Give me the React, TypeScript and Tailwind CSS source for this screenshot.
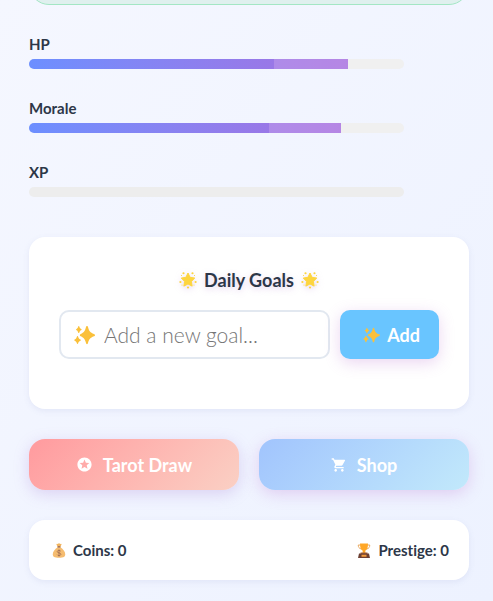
import { useState } from 'react';
import { MdShoppingCart, MdStars } from 'react-icons/md';

interface IconProps {
    className?: string;
}

interface Stat {
    name: string;
    value: number;
}

const stats: Stat[] = [
    { name: 'HP', value: 85 },
    { name: 'Morale', value: 83.3 },
    { name: 'XP', value: 0 },
];

const Sparkles = ({ className }: IconProps) => (
    <svg viewBox="0 0 42 40" className={className} fill="#fac03a" aria-hidden="true">
        <path d="M26 2c1.200 0 1.600.8 2 2.200 2.300 8.500 4.200 11 12 14 1.300.5 2 1 2 2.200s-.7 1.700-2 2.200c-7.800 3-9.700 5.500-12 13.500-.4 1.400-.8 2.300-2 2.300s-1.600-.9-2-2.300c-2.300-8-4.200-10.500-10.500-13.500-1.200-.5-1.800-1-1.800-2.200s.6-1.700 1.800-2.200c6.300-3 8.200-5.500 10.500-14 .4-1.400.8-2.200 2-2.200z" />
        <path d="M9.500 2c.7 0 .9.500 1.100 1.200 1 3.300 1.500 3.700 3.700 4.700.7.300 1.100.6 1.100 1.200s-.4.900-1.100 1.200c-2.200 1-2.700 1.700-3.700 4.600-.2.700-.4 1.200-1.100 1.200s-.9-.5-1.100-1.200c-1-2.900-1.500-3.600-3.400-4.600-.7-.3-1-.6-1-1.200s.3-.9 1-1.200c1.900-1 2.400-1.400 3.400-4.700.2-.7.400-1.200 1.100-1.200z" />
        <path d="M7 22c.8 0 1 .6 1.300 1.400 1 3.300 1.800 4.300 4.400 5.400.7.300 1.100.7 1.100 1.300s-.4 1-1.100 1.300c-2.600 1.100-3.400 2-4.400 5.200-.3.800-.5 1.400-1.300 1.400s-1-.6-1.300-1.400c-1-3.200-1.800-4.100-4.200-5.200-.7-.3-1.100-.7-1.100-1.300s.4-1 1.100-1.300c2.400-1.100 3.200-2.100 4.200-5.400.3-.8.500-1.400 1.300-1.400z" />
    </svg>
);

const GlowingStar = ({ className }: IconProps) => (
    <svg viewBox="0 0 36 36" className={className} fill="#fdd53f" aria-hidden="true">
        <path
            d="M18 4l4.200 8.700 9.300 1.400-6.700 6.700 1.500 9.500-8.300-4.400-8.300 4.400 1.500-9.500-6.700-6.700 9.300-1.400z"
            stroke="#fdd53f"
            strokeWidth="2"
            strokeLinejoin="round"
        />
        <circle cx="9" cy="4.500" r="2.200" />
        <circle cx="27" cy="4.500" r="2.200" />
        <circle cx="2.800" cy="22" r="2.200" />
        <circle cx="33.200" cy="22" r="2.200" />
        <circle cx="18" cy="33" r="2.200" />
        <circle cx="5" cy="9" r="1.100" />
        <circle cx="31" cy="9" r="1.100" />
        <circle cx="6" cy="28" r="1.100" />
        <circle cx="30" cy="28" r="1.100" />
    </svg>
);

const MoneyBag = ({ className }: IconProps) => (
    <svg viewBox="0 0 28 30" className={className} aria-hidden="true">
        <path d="M8.500 1.500c2 .8 3 .4 5.500-.8 2.500 1.200 3.500 1.600 5.500.8l-2.300 6h-6.400z" fill="#f2b560" />
        <path d="M11 8.500h6c5 3.500 9.500 8.500 9.500 14 0 5-3 7-12.500 7s-12.500-2-12.500-7c0-5.500 4.500-10.500 9.500-14z" fill="#f5bc70" />
        <rect x="11" y="6.500" width="6" height="2.500" rx="1.200" fill="#8d5a4a" />
        <path
            d="M17.500 16.500c-.8-1.300-2-1.800-3.500-1.800-2 0-3.500 1-3.500 2.600 0 3.600 7.200 1.500 7.200 5.200 0 1.700-1.600 2.700-3.700 2.700-1.700 0-3-.6-3.700-2M14 13v14"
            fill="none"
            stroke="#9a6650"
            strokeWidth="1.500"
        />
    </svg>
);

const Trophy = ({ className }: IconProps) => (
    <svg viewBox="0 0 28 30" className={className} aria-hidden="true">
        <path d="M7 4H2.500c0 4 1.500 7 6 8M21 4h4.500c0 4-1.500 7-6 8" fill="none" stroke="#e6a050" strokeWidth="1.800" />
        <path d="M6 1h16c0 7-1 12.500-5.500 14.500L17 20h-6l.5-4.500C7 13.500 6 8 6 1z" fill="#ffa726" />
        <path d="M7 19h14v3H7z" fill="#a4623a" />
        <path d="M4 21h20l2 9H2z" fill="#6d4033" />
        <rect x="9" y="23.500" width="10" height="4" fill="#f59a3c" />
    </svg>
);

const StatBar = ({ name, value }: Stat) => (
    <div>
        <p id={name} className="mb-[5px] text-[15px] leading-5 font-bold">
            {name}
        </p>
        <div
            role="progressbar"
            aria-labelledby={name}
            aria-valuenow={value}
            className={`h-[10px] w-[85.2%] overflow-hidden rounded-[5px] ${value > 0 ? 'bg-[#f0f0f0]' : 'bg-[#ededed]'}`}
        >
            <div className="flex h-full bg-linear-to-r from-[#6c8fff] to-[#a370e0]" style={{ width: `${value}%` }}>
                <div className="ml-auto h-full w-[23%] bg-[#e0b8f0]/30" />
            </div>
        </div>
    </div>
);

export default function App() {
    const [goal, setGoal] = useState('');

    return (
        <div className="min-h-screen bg-linear-to-br from-[#f5f7ff] to-[#edf2ff] pr-6 pb-[21px] pl-[29px] font-['Lato','Open_Sans',sans-serif] text-[#2d3748] [font-variant-ligatures:none]">
            <div className="flex h-[5px] flex-col justify-end overflow-hidden">
                <div className="h-10 shrink-0 rounded-[20px] border border-[#a3e6c4] bg-[#dff0ee]" />
            </div>

            <div className="mt-[29px] flex flex-col gap-[29px]">
                {stats.map((stat) => (
                    <StatBar key={stat.name} {...stat} />
                ))}
            </div>

            <section className="mt-10 rounded-2xl bg-white px-[30px] pt-[30px] pb-[50px] shadow-[0_2px_6px_rgba(100,110,180,0.10)]">
                <h2 className="mb-[17px] flex items-center justify-center gap-[7px] text-lg leading-[26px] font-bold [text-shadow:0_2px_6px_rgba(180,130,210,0.35)]">
                    <GlowingStar className="size-[18px] drop-shadow-[0_2px_3px_rgba(180,130,210,0.3)]" />
                    Daily Goals
                    <GlowingStar className="size-[18px] drop-shadow-[0_2px_3px_rgba(180,130,210,0.3)]" />
                </h2>
                <form className="flex gap-[10px]" onSubmit={(e) => e.preventDefault()}>
                    <label className="flex h-[49px] min-w-0 flex-1 items-center gap-[9px] rounded-[10px] border-2 border-[#e2e8f0] px-[13px]">
                        <Sparkles className="h-5 w-[21px] shrink-0" />
                        <input
                            type="text"
                            value={goal}
                            onChange={(e) => setGoal(e.target.value)}
                            placeholder="Add a new goal..."
                            aria-label="Add a new goal"
                            className="w-full min-w-0 bg-transparent text-[21px] leading-7 font-light outline-none placeholder:text-[#757575]"
                        />
                    </label>
                    <button
                        type="submit"
                        className="flex w-[99px] items-center justify-center gap-[7px] rounded-[10px] bg-[#69c5ff] pl-1 text-lg font-bold text-white shadow-[0_4px_15px_rgba(190,120,210,0.3)]"
                    >
                        <Sparkles className="h-4 w-[17px]" />
                        Add
                    </button>
                </form>
            </section>

            <div className="mt-[30px] grid grid-cols-2 gap-5">
                <button className="flex h-[51px] items-center justify-center gap-[10px] rounded-2xl bg-linear-135 from-[#ff9a9e] to-[#fad0c4] text-lg font-bold text-white shadow-[0_4px_15px_rgba(160,120,210,0.28)]">
                    <MdStars className="size-[17px]" />
                    Tarot Draw
                </button>
                <button className="flex h-[51px] items-center justify-center gap-[10px] rounded-2xl bg-linear-135 from-[#a1c4fd] to-[#c2e9fb] text-lg font-bold text-white shadow-[0_4px_15px_rgba(190,120,210,0.3)]">
                    <MdShoppingCart className="size-4" />
                    Shop
                </button>
            </div>

            <footer className="mt-[30px] flex h-[60px] items-center justify-between rounded-2xl bg-white pr-5 pl-[23px] text-[15px] leading-5 font-bold shadow-[0_2px_6px_rgba(100,110,180,0.10)]">
                <span className="flex items-center gap-[7px]">
                    <MoneyBag className="h-[15px] w-[14px]" />
                    Coins: 0
                </span>
                <span className="flex items-center gap-[7px]">
                    <Trophy className="h-[15px] w-[14px]" />
                    Prestige: 0
                </span>
            </footer>
        </div>
    );
}
